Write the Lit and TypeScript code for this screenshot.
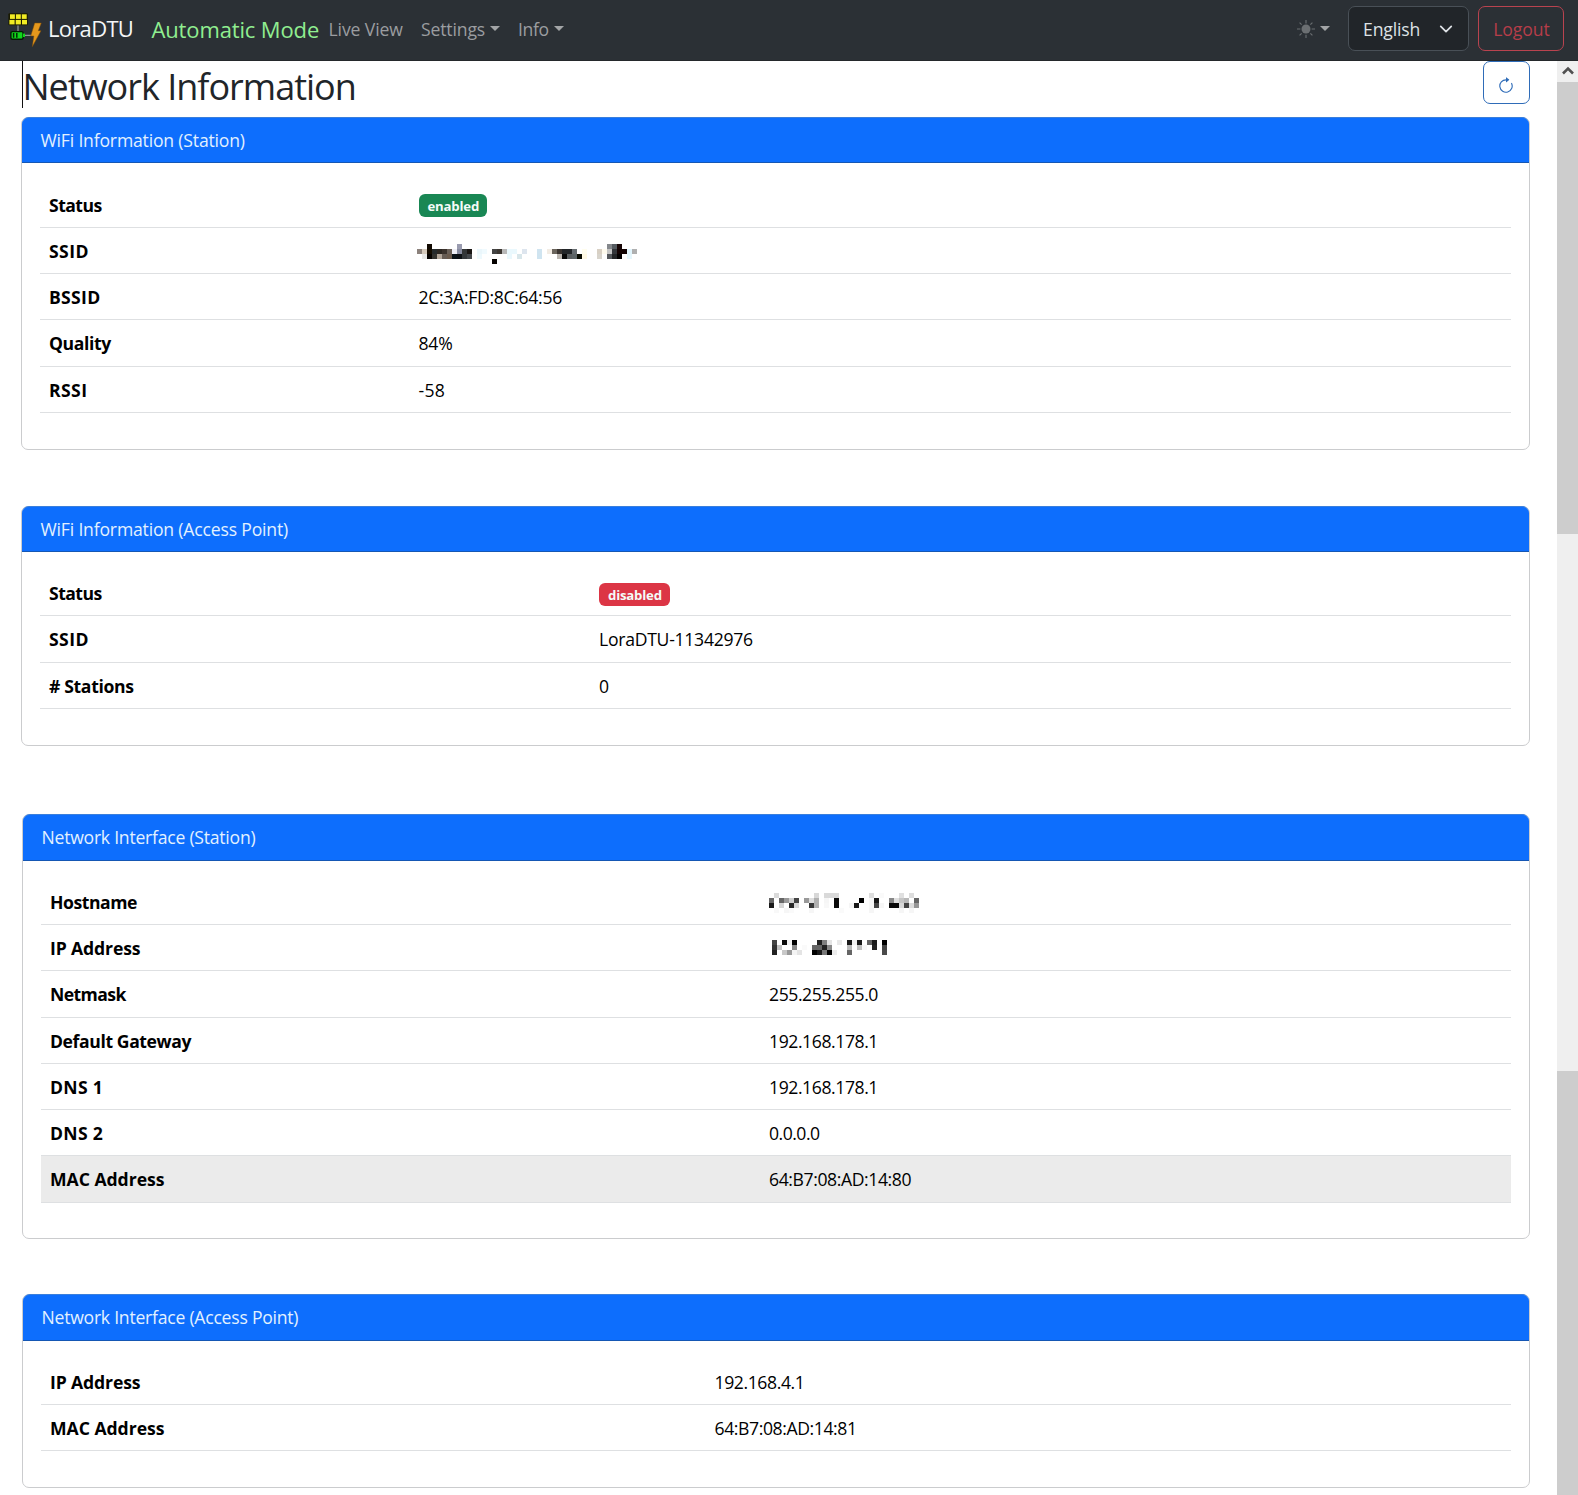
import { LitElement, html, css, svg } from "lit";
import { customElement, property } from "lit/decorators.js";

type Cell = [number, string];
type Mosaic = { kind: string; cells: Cell[][] };
type Value = { text?: string; badge?: "on" | "off"; mosaic?: Mosaic; spacing?: number };
type Row = { label: string; spacing: number; height: number; value: Value; hover?: boolean };
type Panel = { title: string; cls: string; rows: Row[] };

const SSID: Mosaic = { kind: "ssid", cells: [
  [[2, "#120a02"], [8, "#9a9cb0"], [38, "#85888c"], [39, "#555b60"], [40, "#170606"]],
  [[0, "#8c827c"], [1, "#d5cabc"], [2, "#150c00"], [3, "#252a2c"], [4, "#2c2722"], [5, "#3a322c"], [6, "#6a6058"], [7, "#eeeef6"], [8, "#888ca0"], [9, "#333638"], [10, "#1a1614"], [12, "#eaf6fb"], [13, "#f0fafe"], [15, "#444444"], [16, "#3d3833"], [17, "#b8b8b8"], [18, "#eaf8fd"], [19, "#eaf8fd"], [21, "#dde5ee"], [24, "#d0e4f0"], [26, "#f2ece4"], [27, "#6a645c"], [28, "#3a3430"], [29, "#232629"], [30, "#232629"], [31, "#666c70"], [33, "#fffdee"], [36, "#d8d0c4"], [37, "#fffbee"], [38, "#c4c4c4"], [39, "#33363a"], [40, "#120202"], [41, "#120202"], [42, "#e2f5fd"], [43, "#b0b0b0"]],
  [[1, "#e8e8e6"], [2, "#050200"], [3, "#33322e"], [4, "#b0a498"], [5, "#665c54"], [6, "#6a5a4c"], [7, "#0a1218"], [8, "#0c1014"], [9, "#33373a"], [10, "#44484c"], [12, "#eef9fd"], [18, "#eaf8fd"], [20, "#d8e6ea"], [24, "#cfe4f0"], [28, "#bbb6b0"], [29, "#0a0a0a"], [30, "#5a5e60"], [31, "#5c6466"], [32, "#080a00"], [33, "#fff9e4"], [36, "#d8d4cc"], [38, "#55585c"], [39, "#222426"], [40, "#020000"], [42, "#e6f7fd"]],
  [[15, "#050200"]],
] };
const HOST: Mosaic = { kind: "host", cells: [
  [[1, "#dadada"], [9, "#d8d8d8"], [11, "#d9d9d9"], [12, "#d9d9d9"], [13, "#d9d9d9"], [20, "#dddddd"], [22, "#fafafa"], [26, "#e0e0e0"], [28, "#dddddd"]],
  [[0, "#666666"], [2, "#666666"], [3, "#999999"], [4, "#cfcfcf"], [5, "#444444"], [7, "#999999"], [8, "#dedede"], [9, "#b0b0b0"], [11, "#f6f6f6"], [13, "#0a0a0a"], [18, "#000000"], [20, "#f8f8f8"], [21, "#181818"], [24, "#888888"], [25, "#e0e0e0"], [26, "#c6c6c6"], [27, "#b8b8b8"], [29, "#666666"]],
  [[0, "#1a1a1a"], [2, "#d5d5d5"], [4, "#282828"], [5, "#d8d8d8"], [8, "#383838"], [9, "#b0b0b0"], [11, "#f8f8f8"], [13, "#0a0a0a"], [16, "#f6f6f6"], [17, "#1a1a1a"], [20, "#f8f8f8"], [21, "#444444"], [22, "#f6f6f6"], [24, "#0a0a0a"], [25, "#0a0a0a"], [26, "#d8d8d8"], [27, "#444444"], [28, "#dcdcdc"], [29, "#969696"]],
  [[1, "#f8f8f8"], [3, "#f6f6f6"], [4, "#fafafa"], [8, "#f6f6f6"], [14, "#fafafa"], [20, "#f6f6f6"], [26, "#f6f6f6"], [28, "#f6f6f6"]],
] };
const IPADDR: Mosaic = { kind: "ip", cells: [
  [[0, "#444444"], [2, "#0a0a0a"], [3, "#f2f2f2"], [4, "#000000"], [9, "#222222"], [10, "#808080"], [11, "#e4e4e4"], [13, "#e8e8e8"], [15, "#181818"], [16, "#f2f2f2"], [17, "#1a1a1a"], [19, "#666666"], [20, "#1a1a1a"], [22, "#000000"]],
  [[0, "#333333"], [1, "#c4c4c4"], [4, "#888888"], [6, "#fafafa"], [8, "#666666"], [9, "#666666"], [10, "#222222"], [11, "#888888"], [15, "#b8b8b8"], [17, "#c0c0c0"], [18, "#f8f8f8"], [20, "#222222"], [22, "#444444"]],
  [[0, "#222222"], [2, "#c8c8c8"], [3, "#999999"], [4, "#f4f4f4"], [5, "#e4e4e4"], [8, "#000000"], [9, "#1a1a1a"], [10, "#777777"], [11, "#000000"], [12, "#ececec"], [15, "#666666"], [22, "#4a4a4a"]],
] };

const PANELS: Panel[] = [
  {
    title: "WiFi Information (Station)", cls: "p1", rows: [
      { label: "Status", spacing: -0.55, height: 46, value: { badge: "on", text: "enabled" } },
      { label: "SSID", spacing: 0.4, height: 46, value: { mosaic: SSID } },
      { label: "BSSID", spacing: 0.3, height: 46, value: { text: "2C:3A:FD:8C:64:56", spacing: -0.31 } },
      { label: "Quality", spacing: -0.4, height: 47, value: { text: "84%", spacing: -0.2 } },
      { label: "RSSI", spacing: 0.4, height: 46, value: { text: "-58", spacing: 0.3 } },
    ],
  },
  {
    title: "WiFi Information (Access Point)", cls: "p2", rows: [
      { label: "Status", spacing: -0.55, height: 46, value: { badge: "off", text: "disabled" } },
      { label: "SSID", spacing: 0.4, height: 47, value: { text: "LoraDTU-11342976", spacing: -0.27 } },
      { label: "# Stations", spacing: -0.35, height: 46, value: { text: "0" } },
    ],
  },
  {
    title: "Network Interface (Station)", cls: "p3", rows: [
      { label: "Hostname", spacing: -0.45, height: 46, value: { mosaic: HOST } },
      { label: "IP Address", spacing: -0.13, height: 46, value: { mosaic: IPADDR } },
      { label: "Netmask", spacing: -0.6, height: 47, value: { text: "255.255.255.0", spacing: -0.42 } },
      { label: "Default Gateway", spacing: -0.4, height: 46, value: { text: "192.168.178.1", spacing: -0.42 } },
      { label: "DNS 1", spacing: 0.32, height: 46, value: { text: "192.168.178.1", spacing: -0.42 } },
      { label: "DNS 2", spacing: 0.32, height: 46, value: { text: "0.0.0.0" } },
      { label: "MAC Address", spacing: -0.03, height: 47, hover: true, value: { text: "64:B7:08:AD:14:80", spacing: -0.4 } },
    ],
  },
  {
    title: "Network Interface (Access Point)", cls: "p4", rows: [
      { label: "IP Address", spacing: -0.13, height: 46, value: { text: "192.168.4.1", spacing: -0.4 } },
      { label: "MAC Address", spacing: -0.03, height: 46, value: { text: "64:B7:08:AD:14:81", spacing: -0.4 } },
    ],
  },
];

@customElement("info-card")
class InfoCard extends LitElement {
  @property({ attribute: false }) panel!: Panel;

  static styles = css`
    :host { display: block; box-sizing: border-box; border: 1px solid #cbccce; border-radius: 7px; background: #fff; }
    .head { box-sizing: border-box; height: var(--head-h, 46px); margin: -1px 0 0; padding: 0 18.5px; background: #0d6efd; border: 1px solid #3a7fdc; border-bottom-color: #1557b4; border-width: 1px 0 1px 0; border-radius: 7px 7px 0 0; color: #e2f1ff; line-height: 44.5px; letter-spacing: var(--head-ls, -0.18px); white-space: nowrap; }
    .rows { padding: var(--rows-top, 18px) 18px 0; }
    .row { box-sizing: border-box; display: grid; grid-template-columns: var(--label-w) 1fr; align-items: center; border-bottom: 1px solid #dee0e2; color: #000; padding-left: 9px; }
    .row.hover { background: #ebebeb; }
    .label { font-weight: 700; white-space: pre; }
    .value { white-space: pre; display: flex; align-items: center; }
    .badge { height: 23px; box-sizing: border-box; border-radius: 6px; padding: 0 8px 0 9px; line-height: 25px; font-size: 13.2px; font-weight: 700; color: #f4fbf8; letter-spacing: -0.2px; }
    .on { background: #198754; margin-top: 1px; }
    .off { background: #dc3545; margin-top: 3px; }
    .mosaic { display: block; }
    .ssid { margin: 7px 0 0 -2px; }
    .host { margin-top: 3px; }
    .ip { margin-left: 3px; }
  `;

  private renderValue(v: Value) {
    if (v.badge) return html`<span class="badge ${v.badge}">${v.text}</span>`;
    if (v.mosaic) {
      const { kind, cells } = v.mosaic;
      const cols = Math.max(...cells.flat().map((c) => c[0])) + 1;
      return html`<svg class="mosaic ${kind}" width=${cols * 5} height=${cells.length * 5} shape-rendering="crispEdges">
        ${cells.map((r, y) => r.map(([x, c]) => svg`<rect x=${x * 5} y=${y * 5} width="5" height="5" fill=${c} />`))}
      </svg>`;
    }
    return v.text;
  }

  render() {
    return html`
      <div class="head">${this.panel.title}</div>
      <div class="rows">
        ${this.panel.rows.map((r) => html`
          <div class="row ${r.hover ? "hover" : ""}" style="height:${r.height}px">
            <span class="label" style="letter-spacing:${r.spacing}px">${r.label}</span>
            <span class="value" style="letter-spacing:${r.value.spacing ?? -0.5}px">${this.renderValue(r.value)}</span>
          </div>`)}
      </div>`;
  }
}

@customElement("app-root")
class AppRoot extends LitElement {
  static styles = css`
    :host { display: flex; flex-direction: column; width: 1578px; height: 1495px; overflow: hidden; background: #fff; color: #212529; font-family: "Open Sans", "Noto Sans", sans-serif; font-size: 17.6px; }
    .nav { height: 61px; flex: none; box-sizing: border-box; background: #2b3035; display: flex; align-items: center; padding: 0 14px 3px 8px; white-space: nowrap; border-bottom: 1px solid #24282b; }
    .logo { flex: none; width: 34px; height: 36px; margin-top: 5px; }
    .brand { color: #f4f6f7; font-size: 22px; letter-spacing: -0.7px; margin-left: 6px; width: 103.5px; margin-top: -1px; }
    .mode { color: #90ee90; font-size: 22px; letter-spacing: -0.14px; width: 177px; }
    .link { color: #9b9da0; letter-spacing: -0.1px; display: flex; align-items: center; }
    .live { width: 92.5px; }
    .settings { width: 97px; letter-spacing: -0.15px; }
    .info { letter-spacing: -0.4px; }
    .caret { border: 5px solid transparent; border-top-color: #a3a5a7; border-bottom: 0; margin-left: 5px; }
    .spacer { flex: 1; }
    .theme { display: flex; align-items: center; width: 51px; }
    .select { box-sizing: border-box; width: 121px; height: 45px; border: 1px solid #495057; border-radius: 7px; background: #212529; color: #dee2e6; display: flex; align-items: center; justify-content: space-between; padding: 0 15px 0 14px; letter-spacing: -0.15px; }
    .logout { box-sizing: border-box; width: 86px; height: 45px; margin-left: 9px; border: 1px solid #b9434f; border-radius: 7px; color: #b63d49; display: flex; align-items: center; justify-content: center; letter-spacing: -0.05px; padding-left: 1px; }
    .main { flex: 1; display: flex; min-height: 0; }
    .content { flex: 1; padding: 0 27px 0 22px; min-width: 0; }
    .top { display: flex; justify-content: space-between; align-items: flex-start; height: 56px; }
    .title { margin: 0; font-weight: 400; font-size: 36px; line-height: 51px; height: 47px; letter-spacing: -1px; text-indent: -0.5px; border-left: 1px solid #111; white-space: nowrap; }
    .refresh { box-sizing: border-box; width: 47px; height: 43px; border: 1px solid #2f6cb8; border-radius: 7px; display: flex; align-items: center; justify-content: center; padding: 6px 1px 0 0; }
    .p1 { height: 333px; margin-left: -1px; --label-w: 369.5px; --rows-top: 19px; }
    .p2 { height: 240px; margin: 56px 0 0 -1px; --label-w: 550px; }
    .p3 { height: 425px; margin-top: 68px; --label-w: 719px; --head-h: 47px; --head-ls: -0.24px; }
    .p4 { height: 194px; margin-top: 55px; --label-w: 664.5px; --head-h: 47px; --head-ls: -0.24px; }
    .bar { width: 21px; flex: none; display: flex; flex-direction: column; background: #efefef; }
    .up { height: 21px; display: flex; align-items: center; justify-content: center; box-sizing: border-box; padding-bottom: 2px; }
    .thumb { height: 452px; background: #cdcdcd; }
    .track { height: 537px; }
    .thumb2 { flex: 1; background: #cdcdcd; }
  `;

  render() {
    return html`
      <div class="nav">
        <svg class="logo" viewBox="0 0 34 36">
          <rect x=".4" y=".3" width="19.4" height="12" rx="1" fill="#1a1a00" />
          <g fill="#f2ec24">
            <rect x="2" y="1.3" width="4.9" height="4.6" /><rect x="7.9" y="1.3" width="4.9" height="4.6" /><rect x="13.8" y="1.3" width="4.9" height="4.6" />
            <rect x="1.4" y="6.9" width="5.2" height="4.5" /><rect x="7.7" y="6.9" width="5.2" height="4.5" /><rect x="14" y="6.9" width="5" height="4.5" />
          </g>
          <path d="M10 12.5v5.5M16.5 22.3h7" stroke="#a9acae" stroke-width="1" />
          <rect x="2.9" y="18.6" width="12.2" height="7.6" rx="1.5" fill="#12d51c" stroke="#031a04" stroke-width="1.4" />
          <rect x="15" y="20.6" width="2" height="3.4" fill="#12d51c" />
          <path d="M5.6 20v4.8M8.8 20v4.8" stroke="#032a05" stroke-width="1.5" />
          <path d="M26.7 10L33.3 10 30.3 17.7 33 17.7 24.3 33.7 25.8 23 22.7 23Z" fill="#e5981d" stroke="#7a4a0a" stroke-width=".5" />
        </svg>
        <span class="brand">LoraDTU</span>
        <span class="mode">Automatic Mode</span>
        <span class="link live">Live View</span>
        <span class="link settings">Settings<i class="caret"></i></span>
        <span class="link info">Info<i class="caret"></i></span>
        <span class="spacer"></span>
        <span class="theme">
          <svg width="18" height="18" viewBox="0 0 16 16" fill="#6b6f72">
            <circle cx="8" cy="8" r="4" />
            <path d="M8 0v3M8 13v3M0 8h3M13 8h3M2.3 2.3l1.8 1.8M11.9 11.9l1.8 1.8M13.7 2.3l-1.8 1.8M4.1 11.9l-1.8 1.8" stroke="#6b6f72" stroke-width="1" />
          </svg>
          <i class="caret"></i>
        </span>
        <span class="select">English
          <svg width="14" height="14" viewBox="0 0 16 16" fill="none" stroke="#dee2e6" stroke-width="2" stroke-linecap="round" stroke-linejoin="round"><path d="m2 5 6 6 6-6" /></svg>
        </span>
        <span class="logout">Logout</span>
      </div>
      <div class="main">
        <div class="content">
          <div class="top">
            <h1 class="title">Network Information</h1>
            <span class="refresh">
              <svg width="18" height="18" viewBox="0 0 16 16" fill="#2f6cb8">
                <path fill-rule="evenodd" d="M8 3a5 5 0 1 0 4.546 2.914.5.5 0 0 1 .908-.417A6 6 0 1 1 8 2z" />
                <path d="M8 4.466V.534a.25.25 0 0 1 .41-.192l2.36 1.966c.12.1.12.284 0 .384L8.41 4.658A.25.25 0 0 1 8 4.466" />
              </svg>
            </span>
          </div>
          ${PANELS.map((p) => html`<info-card class=${p.cls} .panel=${p}></info-card>`)}
        </div>
        <div class="bar">
          <div class="up"><svg width="12" height="9" viewBox="0 0 12 9" fill="none" stroke="#505050" stroke-width="2.6"><path d="M1 7.5 6 2.5 11 7.5" /></svg></div>
          <div class="thumb"></div>
          <div class="track"></div>
          <div class="thumb2"></div>
        </div>
      </div>`;
  }
}
